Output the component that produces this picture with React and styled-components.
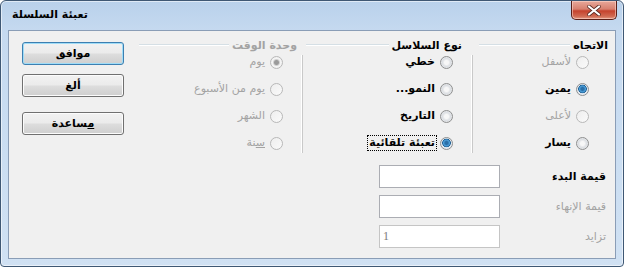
import React from 'react';
import styled, { createGlobalStyle } from 'styled-components';

const Global = createGlobalStyle`
  html, body { margin: 0; padding: 0; background: #ffffff; }
  body { font-family: "DejaVu Sans", sans-serif; }
`;

const Window = styled.div`
  box-sizing: border-box;
  width: 624px;
  height: 267px;
  border: 1px solid #3f5874;
  border-radius: 6px 6px 4px 4px;
  background: linear-gradient(180deg, #b9d1eb 0%, #c6daf0 12%, #cbdef2 60%, #d0e1f3 100%);
  box-shadow: inset 0 0 0 1px rgba(255, 255, 255, 0.55);
  display: flex;
  flex-direction: column;
  padding: 0 7px 7px;
  overflow: hidden;
`;

const TitleBar = styled.div`
  height: 29px;
  display: flex;
  align-items: flex-start;
  justify-content: space-between;
  direction: ltr;
`;

const Title = styled.div`
  padding: 7px 0 0 4px;
  font: bold 11px "DejaVu Sans", sans-serif;
  color: #000;
  direction: rtl;
`;

const Close = styled.div`
  width: 46px;
  height: 19px;
  margin-right: -1px;
  box-sizing: border-box;
  border: 1px solid #5a1f18;
  border-top: none;
  border-radius: 0 0 5px 5px;
  background: linear-gradient(180deg, #e8a89a 0%, #d7806f 45%, #c5422d 55%, #d06a52 85%, #e39a86 100%);
  box-shadow: inset 0 0 0 1px rgba(255, 220, 210, 0.55);
  display: flex;
  align-items: center;
  justify-content: center;
`;

const Client = styled.div`
  flex: 1;
  border: 1px solid #8a9db6;
  background: #f0f0f0;
  display: flex;
  direction: rtl;
  justify-content: space-between;
  padding: 0 7px 0 13px;
`;

const Main = styled.div`
  width: 469px;
  padding-top: 7px;
  display: flex;
  flex-direction: column;
`;

const GroupsRow = styled.div`
  display: flex;
  align-items: flex-start;
`;

const Column = styled.div`
  width: ${p => p.$w}px;
  display: flex;
  flex-direction: column;
`;

const Heading = styled.div`
  height: 14px;
  display: flex;
  align-items: center;
  gap: 3px;
  padding-right: ${p => p.$pr || 0}px;
  padding-left: ${p => p.$pl || 0}px;
`;

const HeadingText = styled.span`
  font: bold 11px "DejaVu Sans", sans-serif;
  color: ${p => (p.$disabled ? '#a3a3a3' : '#000')};
  white-space: nowrap;
`;

const HeadingLine = styled.span`
  flex: 1;
  height: 0;
  border-top: 1px solid #d5dfe5;
  border-bottom: 1px solid #ffffff;
`;

const Body = styled.div`
  display: flex;
  flex-direction: column;
  gap: 7px;
`;

const Separator = styled.div`
  width: 1px;
  height: 98px;
  margin-top: 17px;
  background: #c9c9c9;
  box-shadow: -1px 0 0 #ffffff;
`;

const RadioRow = styled.div`
  height: 20px;
  display: flex;
  align-items: center;
  gap: 3px;
  padding-right: 19px;
`;

const Radio = styled.span`
  box-sizing: border-box;
  width: 13px;
  height: 13px;
  flex: none;
  border-radius: 50%;
  border: 1px solid ${p => (p.$disabled ? '#b8b8b8' : '#8e8f8f')};
  background: ${p =>
    p.$checked
      ? p.$disabled
        ? 'radial-gradient(circle, #9a9a9a 0 2px, #d0d0d0 3px, #f4f4f4 4px, #ececec 100%)'
        : 'radial-gradient(circle at 50% 45%, #2a6fa8 0 1.5px, #4fa3de 3px, #1d5f93 4px, #dfe6ee 4.6px, #f2f4f6 100%)'
      : p.$disabled
        ? 'linear-gradient(135deg, #eeeeee, #fafafa)'
        : 'radial-gradient(circle, #f7f7f7 0 2px, #dcdfe3 4px, #f4f4f4 100%)'};
`;

const Label = styled.span`
  font: ${p => (p.$disabled ? 'normal' : 'bold')} 11px "DejaVu Sans", sans-serif;
  color: ${p => (p.$disabled ? '#a3a3a3' : '#000')};
  white-space: nowrap;
  padding: 0 1px;
  border: 1px dotted ${p => (p.$focus ? '#000' : 'transparent')};
  line-height: 14px;
`;

const Mn = styled.span`
  text-decoration: underline;
`;

const Inputs = styled.div`
  margin-top: 12px;
  display: flex;
  flex-direction: column;
  gap: 7px;
`;

const InputRow = styled.div`
  display: grid;
  grid-template-columns: 108px 121px;
  align-items: center;
`;

const FieldLabel = styled.span`
  font: ${p => (p.$disabled ? 'normal' : 'bold')} 11px "DejaVu Sans", sans-serif;
  color: ${p => (p.$disabled ? '#a3a3a3' : '#000')};
  text-align: right;
  padding-right: 2px;
`;

const Field = styled.input`
  box-sizing: border-box;
  width: 121px;
  height: 23px;
  margin: 0;
  border: 1px solid ${p => (p.$disabled ? '#c5c5c5' : '#abadb3')};
  background: #ffffff;
  direction: ltr;
  padding: 0 3px;
  font: 12px "Liberation Serif", serif;
  color: #7a7a7a;
  outline: none;
`;

const Buttons = styled.div`
  width: 102px;
  padding-top: 11px;
  display: flex;
  flex-direction: column;
`;

const Button = styled.div`
  box-sizing: border-box;
  width: 102px;
  height: 23px;
  margin-top: ${p => p.$mt || 0}px;
  border: 1px solid ${p => (p.$default ? '#3c7fb1' : '#707070')};
  border-radius: 3px;
  background: linear-gradient(180deg, #f2f2f2 0%, #ebebeb 48%, #dddddd 52%, #cfcfcf 100%);
  box-shadow: inset 0 0 0 1px ${p => (p.$default ? '#9fdcf7' : '#fcfcfc')};
  display: flex;
  align-items: center;
  justify-content: center;
  font: bold 11px "DejaVu Sans", sans-serif;
  color: #000;
`;

const Option = ({ label, checked, disabled, focus }) => (
  <RadioRow>
    <Radio $checked={checked} $disabled={disabled} />
    <Label $disabled={disabled} $focus={focus}>{label}</Label>
  </RadioRow>
);

export default function App() {
  return (
    <>
      <Global />
      <Window>
        <TitleBar>
          <Title>تعبئة السلسلة</Title>
          <Close>
            <svg width="14" height="11" viewBox="0 0 14 11">
              <path d="M2 1.5 L12 9.5 M12 1.5 L2 9.5" stroke="#5a2a22" strokeWidth="3.6" strokeLinecap="round" />
              <path d="M2 1.5 L12 9.5 M12 1.5 L2 9.5" stroke="#ffffff" strokeWidth="2.2" strokeLinecap="round" />
            </svg>
          </Close>
        </TitleBar>
        <Client>
          <Main>
            <GroupsRow>
              <Column $w={135}>
                <Heading $pl={6}>
                  <HeadingText>الاتجاه</HeadingText>
                  <HeadingLine />
                </Heading>
                <Body>
                  <Option label="لأسفل" disabled />
                  <Option label="يمين" checked />
                  <Option label="لأعلى" disabled />
                  <Option label={<><Mn>ي</Mn>سار</>} />
                </Body>
              </Column>
              <Separator />
              <Column $w={169}>
                <Heading $pr={10} $pl={3}>
                  <HeadingText>نوع السلاسل</HeadingText>
                  <HeadingLine />
                </Heading>
                <Body>
                  <Option label="خطي" />
                  <Option label="النمو..." />
                  <Option label="التاريخ" />
                  <Option label="تعبئة تلقائية" checked focus />
                </Body>
              </Column>
              <Separator />
              <Column $w={163}>
                <Heading $pr={5}>
                  <HeadingText $disabled>وحدة الوقت</HeadingText>
                  <HeadingLine />
                </Heading>
                <Body>
                  <Option label="يوم" checked disabled />
                  <Option label="يوم من الأسبوع" disabled />
                  <Option label="الشهر" disabled />
                  <Option label={<><Mn>س</Mn>نة</>} disabled />
                </Body>
              </Column>
            </GroupsRow>
            <Inputs>
              <InputRow>
                <FieldLabel>قيمة البدء</FieldLabel>
                <Field readOnly defaultValue="" />
              </InputRow>
              <InputRow>
                <FieldLabel $disabled>قيمة الإنهاء</FieldLabel>
                <Field readOnly defaultValue="" />
              </InputRow>
              <InputRow>
                <FieldLabel $disabled>تزايد</FieldLabel>
                <Field readOnly defaultValue="1" $disabled />
              </InputRow>
            </Inputs>
          </Main>
          <Buttons>
            <Button $default>موافق</Button>
            <Button $mt={9}>ألغ</Button>
            <Button $mt={15}><span><Mn>م</Mn>ساعدة</span></Button>
          </Buttons>
        </Client>
      </Window>
    </>
  );
}
